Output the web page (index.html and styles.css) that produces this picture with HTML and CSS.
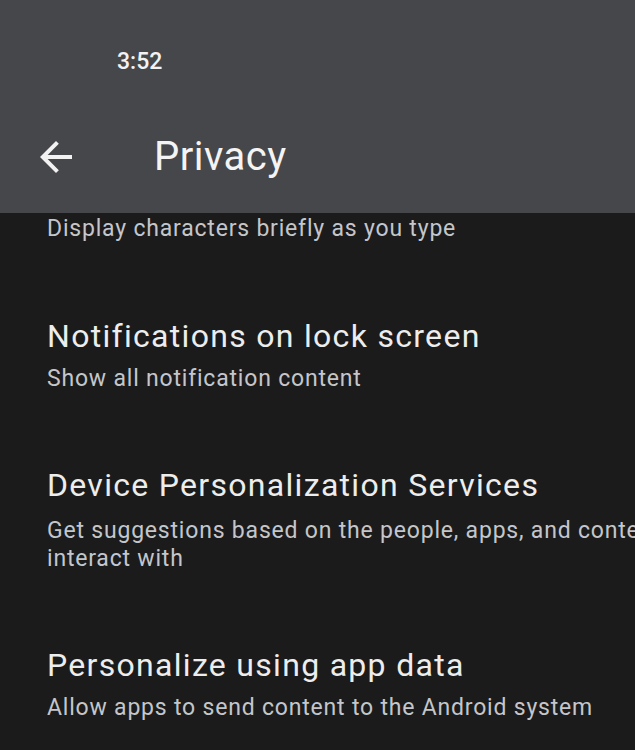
FILE: index.html
```html
<!DOCTYPE html>
<html lang="en">
<head>
<meta charset="utf-8">
<title>Privacy</title>
<link rel="stylesheet" href="styles.css">
</head>
<body>
<div class="screen">
  <header class="appbar">
    <div class="status-bar">
      <span class="time">3:52</span>
    </div>
    <div class="toolbar">
      <svg class="back" viewBox="0 0 24 24" aria-hidden="true">
        <path d="M20 11H7.83l5.59-5.59L12 4l-8 8 8 8 1.41-1.41L7.83 13H20v-2z"/>
      </svg>
      <h1 class="title">Privacy</h1>
    </div>
  </header>
  <main class="list">
    <div class="item item-partial">
      <div class="summary">Display characters briefly as you type</div>
    </div>
    <div class="item">
      <div class="item-title">Notifications on lock screen</div>
      <div class="summary">Show all notification content</div>
    </div>
    <div class="item">
      <div class="item-title">Device Personalization Services</div>
      <div class="summary summary-multi">Get suggestions based on the people, apps, and content you<br>interact with</div>
    </div>
    <div class="item">
      <div class="item-title">Personalize using app data</div>
      <div class="summary">Allow apps to send content to the Android system</div>
    </div>
  </main>
</div>
</body>
</html>
```
FILE: styles.css
```css
html, body {
  margin: 0;
  padding: 0;
  background: #1b1b1b;
  overflow: hidden;
}

.screen {
  width: 635px;
  height: 750px;
  overflow: hidden;
  display: flex;
  flex-direction: column;
  font-family: Roboto, "Noto Sans", "Liberation Sans", sans-serif;
  background: #1b1b1b;
}

.appbar {
  background: #46474b;
  padding: 48px 0 32px;
  display: flex;
  flex-direction: column;
}

.status-bar {
  height: 28px;
  padding-left: 117px;
  display: flex;
  align-items: center;
}

.time {
  color: #f2f2f2;
  font-size: 23px;
  font-weight: 500;
  line-height: 28px;
}

.toolbar {
  margin-top: 57px;
  height: 48px;
  padding-left: 32px;
  display: flex;
  align-items: center;
  gap: 74px;
}

.back {
  width: 48px;
  height: 48px;
  fill: #f2f2f2;
  flex: none;
}

.title {
  margin: 0;
  color: #f4f4f4;
  font-size: 40px;
  font-weight: 400;
  line-height: 48px;
  letter-spacing: 0.5px;
}

.list {
  display: flex;
  flex-direction: column;
  white-space: nowrap;
}

.item {
  padding: 39px 0 33px 47px;
  display: flex;
  flex-direction: column;
}

.item-partial {
  padding-top: 2px;
  padding-bottom: 34px;
}

.item-title {
  color: #ededed;
  font-size: 32px;
  line-height: 40px;
  letter-spacing: 1.3px;
}

.summary {
  margin-top: 9px;
  color: #c4c6cb;
  font-size: 23px;
  line-height: 28px;
  letter-spacing: 0.8px;
}

.summary-multi {
  margin-top: 12px;
}

.item-partial .summary {
  margin-top: 0;
}
```
